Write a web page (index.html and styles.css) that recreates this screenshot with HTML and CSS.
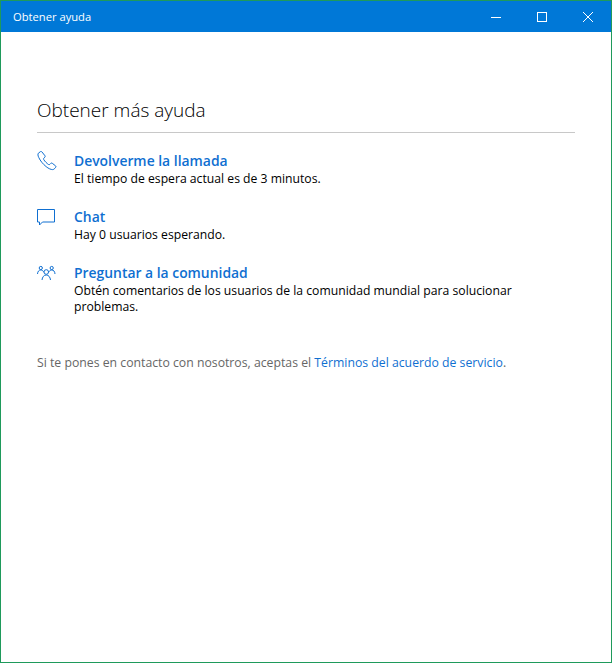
FILE: index.html
```html
<!DOCTYPE html>
<html lang="es">
<head>
<meta charset="utf-8">
<title>Obtener ayuda</title>
<link rel="stylesheet" href="styles.css">
</head>
<body>
<div class="window">
  <header class="titlebar">
    <span class="title">Obtener ayuda</span>
    <div class="controls">
      <span class="ctl"><svg width="12" height="12" viewBox="0 0 12 12"><path d="M1 6.500h10" stroke="#fff" fill="none"/></svg></span>
      <span class="ctl"><svg width="12" height="12" viewBox="0 0 12 12"><rect x="1.500" y="1.500" width="9" height="9" stroke="#fff" fill="none"/></svg></span>
      <span class="ctl"><svg width="12" height="12" viewBox="0 0 12 12"><path d="M1 1l10 10M11 1L1 11" stroke="#fff" fill="none"/></svg></span>
    </div>
  </header>
  <main class="content">
    <h1 class="heading">Obtener más ayuda</h1>
    <ul class="options">
      <li class="option">
        <svg class="icon" width="20" height="20" viewBox="0 0 20 20"><path d="M3.200 .8 1.400 2.200C.7 2.900.8 4.600 1.800 6.600c1.600 3.300 4 6.300 7.300 9 2.400 2 5 3 6.400 3 1 0 1.600-.4 2.300-1.200l.9-1.100c.4-.5.3-1-.1-1.400l-3.300-2.600c-.5-.4-1-.4-1.400 0l-1 1c-.4.400-.9.500-1.400.200-1.500-1-3.600-3-4.800-5-.3-.5-.2-1 .2-1.400l.9-.9c.4-.4.500-.9.200-1.400L5 1C4.500.3 3.800.3 3.200.8Z" fill="none" stroke="#0f6fd1"/></svg>
        <div class="option-text">
          <a class="option-title">Devolverme la llamada</a>
          <p class="option-desc">El tiempo de espera actual es de 3 minutos.</p>
        </div>
      </li>
      <li class="option">
        <svg class="icon" width="20" height="20" viewBox="0 0 20 20"><path d="M.500 2.500h17v12.500H5.500l-3 3V15H.500Z" fill="none" stroke="#0f6fd1"/></svg>
        <div class="option-text">
          <a class="option-title">Chat</a>
          <p class="option-desc">Hay 0 usuarios esperando.</p>
        </div>
      </li>
      <li class="option">
        <svg class="icon" width="20" height="20" viewBox="0 0 20 20" fill="none" stroke="#0f6fd1"><circle cx="3.800" cy="5" r="1.600"/><circle cx="14.700" cy="5" r="1.600"/><circle cx="9.250" cy="9" r="2.300"/><path d="M.5 11c.2-2.600 1.400-4 3.300-4 1.400 0 2.400.8 2.900 2.200M18 11c-.2-2.600-1.400-4-3.300-4-1.400 0-2.400.8-2.900 2.200M5 17c.3-2.800 1.800-5 4.250-5s3.950 2.200 4.250 5"/></svg>
        <div class="option-text">
          <a class="option-title">Preguntar a la comunidad</a>
          <p class="option-desc">Obtén comentarios de los usuarios de la comunidad mundial para solucionar problemas.</p>
        </div>
      </li>
    </ul>
    <p class="legal">Si te pones en contacto con nosotros, aceptas el <a class="legal-link">Términos del acuerdo de servicio</a>.</p>
  </main>
</div>
</body>
</html>
```

FILE: styles.css
```css
html, body {
  margin: 0;
  padding: 0;
  height: 100%;
  background: #fff;
}
.window {
  box-sizing: border-box;
  height: 663px;
  border: 1px solid #1f9a5b;
  font-family: "Open Sans", "Liberation Sans", sans-serif;
  display: flex;
  flex-direction: column;
}
.titlebar {
  height: 31px;
  flex: none;
  background: #0078d7;
  display: flex;
  align-items: center;
  justify-content: space-between;
  color: #fff;
}
.title {
  margin-left: 12px;
  font-size: 11.200px;
}
.controls {
  display: flex;
}
.ctl {
  width: 46px;
  height: 31px;
  display: flex;
  align-items: center;
  justify-content: center;
}
.content {
  padding: 66px 36px 0;
}
.heading {
  margin: 0;
  height: 34px;
  line-height: 25px;
  font-size: 19px;
  font-weight: 300;
  color: #000;
  border-bottom: 1px solid #c8c8c8;
}
.options {
  list-style: none;
  margin: 18px 0 0;
  padding: 0;
}
.option {
  display: flex;
  gap: 17px;
  margin-bottom: 20px;
}
.icon {
  flex: none;
}
.option-text {
  width: 460px;
}
.option-title {
  display: block;
  font-size: 13.900px;
  line-height: 20px;
  font-weight: 600;
  color: #0f6fd1;
}
.option-desc {
  margin: 0;
  font-size: 12.200px;
  line-height: 16px;
  color: #000;
}
.legal {
  margin: 40px 0 0;
  font-size: 12.250px;
  line-height: 16px;
  color: #666;
}
.legal-link {
  color: #0f6fd1;
}
```
